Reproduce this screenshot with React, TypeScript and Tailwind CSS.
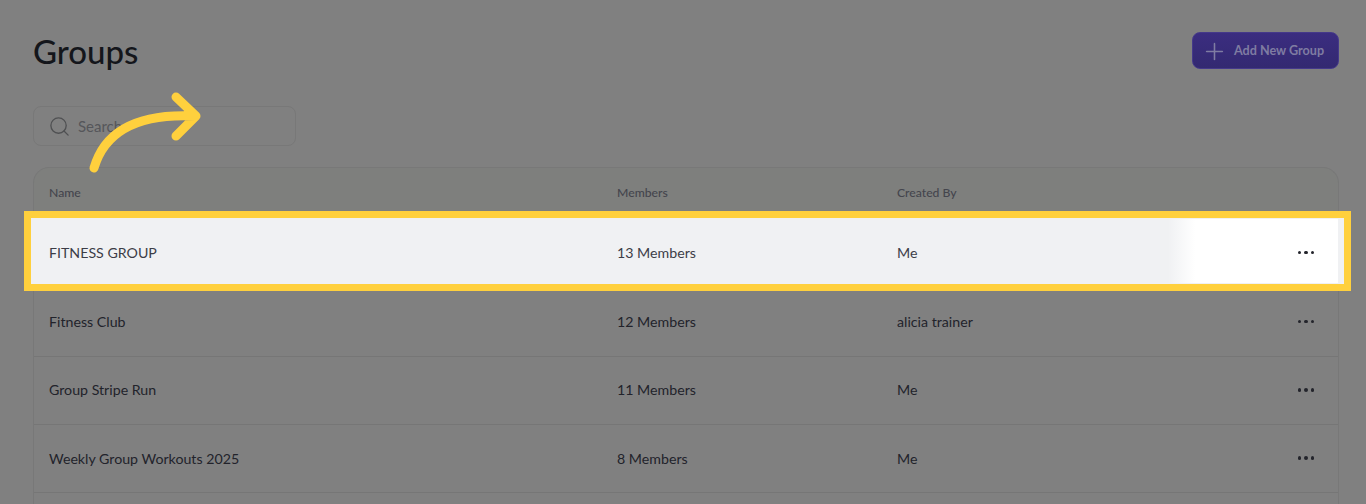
import { Plus, Search } from "lucide-react";

const rows = [
  { name: "Fitness Club", members: "12 Members", creator: "alicia trainer" },
  { name: "Group Stripe Run", members: "11 Members", creator: "Me" },
  { name: "Weekly Group Workouts 2025", members: "8 Members", creator: "Me" },
  { name: "", members: "", creator: "" },
];

function Dots() {
  return (
    <div className="flex gap-[3px]">
      <span className="w-[3.5px] h-[3.5px] rounded-full bg-[#23242b]" />
      <span className="w-[3.5px] h-[3.5px] rounded-full bg-[#23242b]" />
      <span className="w-[3.5px] h-[3.5px] rounded-full bg-[#23242b]" />
    </div>
  );
}

export default function App() {
  return (
    <div className="relative h-[504px] overflow-hidden bg-[#808080] pl-[33px] pr-[27px] font-['Lato',sans-serif]">
      <div className="flex items-start justify-between pt-[32px]">
        <h1 className="text-[33px] leading-[38px] font-medium text-[#14161b]">Groups</h1>
        <button className="flex items-center w-[147px] h-[37px] pl-[8px] pt-[1px] rounded-lg border border-[#45398a] bg-gradient-to-b from-[#3b2d80] to-[#332971] text-[12.6px] font-bold text-[#7f7ca2]">
          <Plus className="w-[27px] h-[27px] mr-[6px]" strokeWidth={1.4} />
          Add New Group
        </button>
      </div>

      <div className="flex items-center w-[263px] h-[40px] mt-[36px] pl-[14px] rounded-lg border border-[#787878]">
        <Search className="w-[23px] h-[23px] text-[#4f5052]" strokeWidth={1.4} />
        <span className="ml-[7px] text-[15px] text-[#55565a]">Search</span>
      </div>

      <div className="mt-[21px] rounded-t-2xl border-x border-t border-[#787878] bg-[#7e7f7d]">
        <div className="grid grid-cols-[568px_280px_1fr] items-center h-[51px] pl-[15px] pb-[1px] text-[12.2px] font-medium text-[#44454d]">
          <span>Name</span>
          <span>Members</span>
          <span>Created By</span>
        </div>

        <div className="relative z-10 grid grid-cols-[568px_280px_1fr] items-center h-[69.5px] pl-[15px] pb-[2px] text-[14.2px] text-[#3c3d47]">
          {/* spotlight frame sits behind the row content */}
          <div className="absolute -left-[10px] -right-[13px] -top-[8px] -bottom-[2.5px] border-[7px] border-[#ffd03d] bg-[#f0f1f3]" />
          <span className="relative">FITNESS GROUP</span>
          <span className="relative">13 Members</span>
          <span className="relative">Me</span>
          <div className="absolute right-0 top-0 bottom-[5.5px] w-[170px] bg-gradient-to-r from-[#f0f1f3] via-white via-[16%] to-white flex items-center justify-end pr-[24px] pt-[3px]">
            <Dots />
          </div>
        </div>

        {rows.map((row, i) => (
          <div
            key={i}
            className="grid grid-cols-[568px_280px_1fr_68px] items-center h-[68.3px] pl-[15px] pb-[1px] border-b border-[#767676] bg-[#808080] text-[14.2px] text-[#22232b]"
          >
            <span>{row.name}</span>
            <span>{row.members}</span>
            <span>{row.creator}</span>
            {row.name && (
              <div className="flex justify-end pr-[24px]">
                <Dots />
              </div>
            )}
          </div>
        ))}
      </div>

      <svg className="absolute left-[80px] top-[85px] w-[135px] h-[95px]" viewBox="80 85 135 95" fill="none">
        <path
          d="M94 168 C105 130 140 113 196 116 M176 97 L196 116 L176 136"
          stroke="#ffd03d"
          strokeWidth="9"
          strokeLinecap="round"
          strokeLinejoin="round"
        />
      </svg>
    </div>
  );
}
